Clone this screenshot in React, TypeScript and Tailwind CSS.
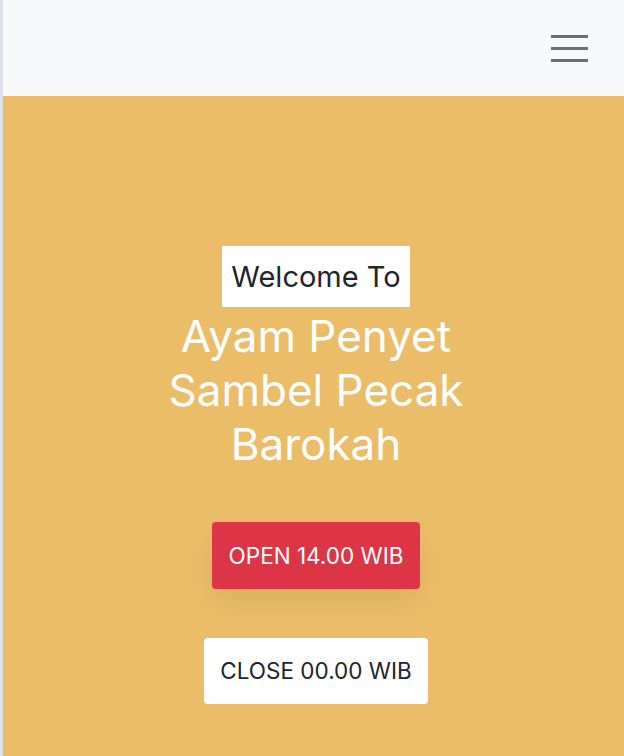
export default function App() {
  return (
    <div className="min-h-[756px] flex flex-col border-l-[3px] border-[#e1e1ea] font-['Inter',sans-serif]">
      {/* Navbar */}
      <nav className="h-[96px] bg-[#f8f9fa] flex items-center justify-end pr-[36px]">
        <button className="flex flex-col gap-[9px] w-[37px]" aria-label="menu">
          <span className="block h-[3px] bg-[#6e6e6e]" />
          <span className="block h-[3px] bg-[#6e6e6e]" />
          <span className="block h-[3px] bg-[#6e6e6e]" />
        </button>
      </nav>

      {/* Hero */}
      <section className="flex-1 bg-[#ecbd69] flex flex-col items-center pl-[5px] pt-[150px] pb-[52px]">
        <div className="bg-white px-[9px] h-[61px] flex items-center text-[29px] text-[#212529]">
          Welcome To
        </div>
        <h1 className="mt-[2px] text-white text-[44px] leading-[54px] text-center w-[330px]">
          Ayam Penyet Sambel Pecak Barokah
        </h1>
        <button className="mt-[51px] bg-[#dc3545] text-white text-[22.5px] w-[208px] h-[67px] rounded-[4px] shadow-[0_14px_30px_rgba(0,0,0,0.07)]">
          OPEN 14.00 WIB
        </button>
        <button className="mt-[49px] bg-white text-[#212529] text-[22.5px] w-[224px] h-[66px] rounded-[4px]">
          CLOSE 00.00 WIB
        </button>
      </section>
    </div>
  )
}
